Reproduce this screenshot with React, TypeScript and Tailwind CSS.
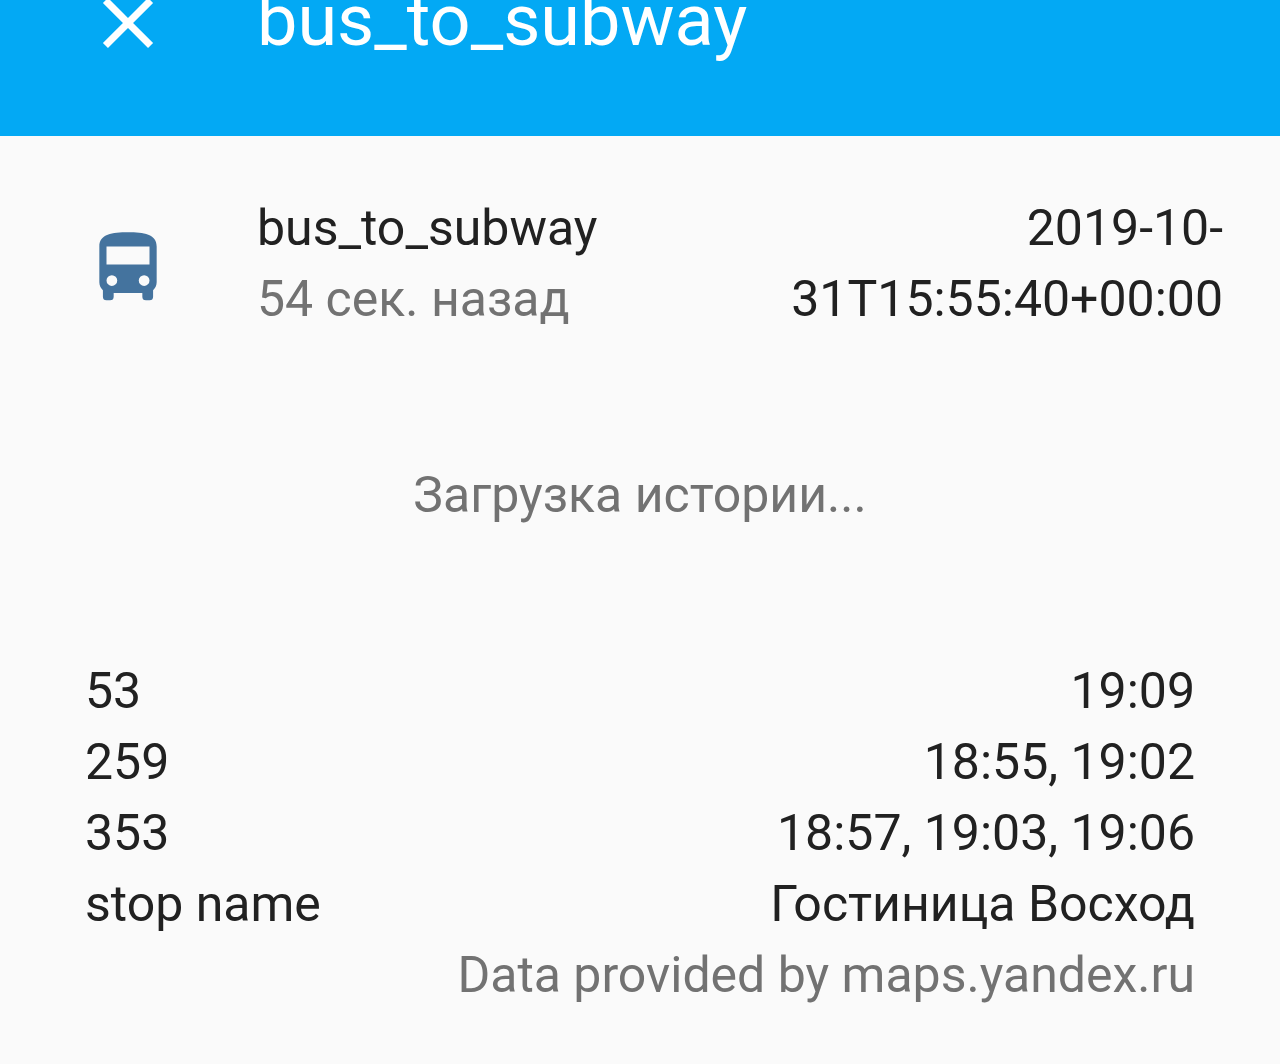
type Attribute = {
  name: string;
  value: string;
};

const attributes: Attribute[] = [
  { name: "53", value: "19:09" },
  { name: "259", value: "18:55, 19:02" },
  { name: "353", value: "18:57, 19:03, 19:06" },
  { name: "stop name", value: "Гостиница Восход" },
];

const CloseIcon = () => (
  <svg viewBox="0 0 24 24" className="h-[86px] w-[86px]" fill="currentColor" aria-hidden="true">
    <path d="M19 6.41 17.59 5 12 10.59 6.41 5 5 6.41 10.59 12 5 17.59 6.41 19 12 13.41 17.59 19 19 17.59 13.41 12z" />
  </svg>
);

const BusIcon = () => (
  <svg viewBox="0 0 24 24" className="h-[86px] w-[86px]" fill="currentColor" aria-hidden="true">
    <path d="M18,11H6V6H18M16.5,17A1.5,1.5 0 0,1 15,15.5A1.5,1.5 0 0,1 16.5,14A1.5,1.5 0 0,1 18,15.5A1.5,1.5 0 0,1 16.5,17M7.5,17A1.5,1.5 0 0,1 6,15.5A1.5,1.5 0 0,1 7.5,14A1.5,1.5 0 0,1 9,15.5A1.5,1.5 0 0,1 7.5,17M4,16C4,16.88 4.39,17.67 5,18.22V20A1,1 0 0,0 6,21H7A1,1 0 0,0 8,20V19H16V20A1,1 0 0,0 17,21H18A1,1 0 0,0 19,20V18.22C19.61,17.67 20,16.88 20,16V6C20,2.5 16.42,2 12,2C7.58,2 4,2.5 4,6V16Z" />
  </svg>
);

const App = () => {
  return (
    <div className="min-h-screen bg-[#fafafa] font-[Roboto,sans-serif] text-[50px] leading-[71px] text-[#212121]">
      <header className="flex h-[136px] items-start overflow-hidden bg-[#03a9f4] pl-[85px] text-white">
        <button type="button" aria-label="Close" className="-mt-5 shrink-0">
          <CloseIcon />
        </button>
        <h1 className="-mt-5 ml-[86px] text-[72px] leading-[82px]">bus_to_subway</h1>
      </header>

      <main>
        <section className="flex items-center pt-[57px] pr-[57px] pl-[85px]">
          <div className="shrink-0 pt-2 text-[#44739e]">
            <BusIcon />
          </div>
          <div className="ml-[86px] flex-1">
            <h2>bus_to_subway</h2>
            <p className="text-[#727272]">54 сек. назад</p>
          </div>
          <p className="w-[440px] text-right wrap-break-word">2019-10-31T15:55:40+00:00</p>
        </section>

        <p className="py-[125px] text-center text-[#727272]">Загрузка истории...</p>

        <section className="px-[85px]">
          <dl>
            {attributes.map((attribute) => (
              <div key={attribute.name} className="flex justify-between">
                <dt>{attribute.name}</dt>
                <dd>{attribute.value}</dd>
              </div>
            ))}
          </dl>
          <p className="text-right text-[#727272]">Data provided by maps.yandex.ru</p>
        </section>
      </main>
    </div>
  );
};

export default App;
